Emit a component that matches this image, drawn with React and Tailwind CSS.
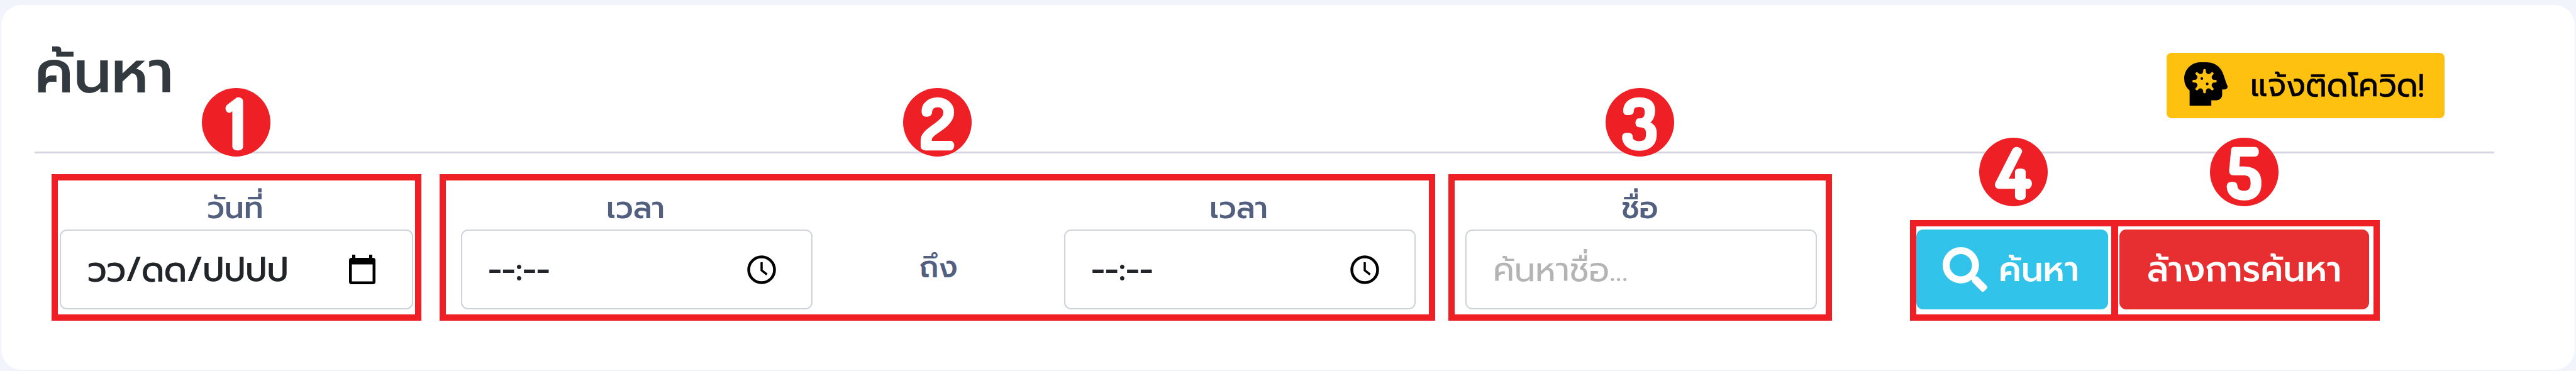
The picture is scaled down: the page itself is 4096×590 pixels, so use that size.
import { FaHeadSideVirus, FaSearch } from 'react-icons/fa';

function Badge({ n, className }) {
  return (
    <span
      className={`absolute flex h-[109px] w-[109px] items-center justify-center rounded-full bg-[#ee1f25] font-['Dosis','Kanit',sans-serif] text-[112px] leading-[109px] font-bold text-white ${className}`}
    >
      <span className="[-webkit-text-stroke:2.5px_white]">{n}</span>
    </span>
  );
}

function Label({ children }) {
  return (
    <div className="h-[78px] pt-[5px] text-center text-[48.500px] leading-[78px] font-medium text-[#525f7f]">
      <span className="mr-[4px]">{children}</span>
    </div>
  );
}

function Field({ children, className }) {
  return (
    <div
      className={`flex h-[127px] items-center justify-between rounded-[11px] border-[2.5px] border-[#ced4da] bg-white text-[53px] leading-[80px] text-[#212529] ${className}`}
    >
      {children}
    </div>
  );
}

function CalendarIcon() {
  return (
    <svg viewBox="0 0 42 48" className="h-12 w-[42px] text-black" fill="currentColor">
      <path d="M5 0h5v5h22V0h5v5h1a4 4 0 0 1 4 4v34a4 4 0 0 1-4 4H4a4 4 0 0 1-4-4V9a4 4 0 0 1 4-4h1zM4.500 15.500v27h33v-27z" />
    </svg>
  );
}

function ClockIcon() {
  return (
    <svg viewBox="0 0 48 48" className="h-12 w-12 text-black" fill="none" stroke="currentColor">
      <circle cx="24" cy="24" r="20.500" strokeWidth="4.500" />
      <path d="M24 12v13l8.500 6.500" strokeWidth="3.500" />
    </svg>
  );
}

function TimeField() {
  return (
    <div className="w-[559px]">
      <Label>เวลา</Label>
      <Field className="pr-[55px] pl-[41px]">
        <span className="font-medium">--:--</span>
        <ClockIcon />
      </Field>
    </div>
  );
}

export default function App() {
  return (
    <div className="h-[590px] w-[4096px] bg-[#f1f4fa] pt-[8px] pr-[2px] pl-[2px] font-['Prompt','Noto_Sans',sans-serif]">
      <main className="flex h-[580px] flex-col rounded-[32px] bg-white">
        <header className="mx-[53px] flex h-[236px] w-[3911px] justify-between border-b-[3px] border-[#d5d6e0]">
          <h1 className="pt-[47px] text-[95px] leading-[120px] font-medium text-[#32393f]">ค้นหา</h1>
          <button className="mt-[76px] mr-[79px] flex h-[104px] w-[442px] items-center rounded-[8px] bg-[#fec110] pl-[28px] text-[50px] leading-[80px] text-black">
            <FaHeadSideVirus className="-mt-[6px] h-[69px] w-[69px]" />
            <span className="ml-[36px] whitespace-nowrap [-webkit-text-stroke:0.5px_black]">แจ้งติดโควิด!</span>
          </button>
        </header>

        <section className="mt-[33px] flex items-end pl-[80px]">
          <div className="relative h-[233px] w-[588px] border-[10.500px] border-[#ee1f25] px-[3px]">
            <Label>วันที่</Label>
            <Field className="pr-[58px] pl-[42px]">
              <span className="[-webkit-text-stroke:1px_#212529]">วว/ดด/ปปปป</span>
              <CalendarIcon />
            </Field>
            <Badge n="1" className="-top-[147px] left-[229px]" />
          </div>

          <div className="relative ml-[29px] flex h-[233px] w-[1583px] justify-between border-[10.500px] border-[#ee1f25] pr-[21px] pl-[24px]">
            <TimeField />
            <div className="pt-[98px] text-[48px] leading-[80px] font-medium text-[#525f7f]">ถึง</div>
            <TimeField />
            <Badge n="2" className="-top-[147px] left-[727px]" />
          </div>

          <div className="relative ml-[21px] h-[233px] w-[610px] border-[10.500px] border-[#ee1f25] pr-[14px] pl-[17px]">
            <Label>ชื่อ</Label>
            <Field className="pl-[42px]">
              <span className="text-[#b4b4b4]">ค้นหาชื่อ...</span>
            </Field>
            <Badge n="3" className="-top-[147px] left-[240px]" />
          </div>

          <div className="relative ml-[124px] h-[160px] w-[331px] border-[10.500px] border-[#ee1f25] pt-[5px]">
            <button className="flex h-[127px] w-[305px] items-center rounded-[11px] bg-[#32c3eb] pl-[42px] text-[55px] leading-[80px] font-medium text-white">
              <FaSearch className="h-[71px] w-[71px]" />
              <span className="ml-[18px] whitespace-nowrap">ค้นหา</span>
            </button>
            <Badge n="4" className="-top-[141px] left-[100px]" />
          </div>

          <div className="relative -ml-[11px] h-[160px] w-[427px] border-[10.500px] border-[#ee1f25] pt-[5px] pl-[3px]">
            <button className="flex h-[127px] w-[397px] items-center justify-center rounded-[11px] bg-[#e72e30] text-[55.500px] leading-[80px] font-medium whitespace-nowrap text-white">
              ล้างการค้นหา
            </button>
            <Badge n="5" className="-top-[141px] left-[147px]" />
          </div>
        </section>
      </main>
    </div>
  );
}
